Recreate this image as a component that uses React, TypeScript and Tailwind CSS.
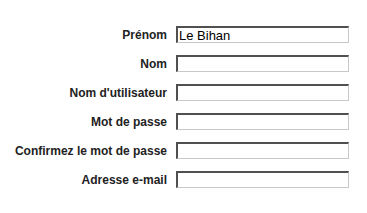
import React from 'react';

const fields: { label: string; value?: string }[] = [
  { label: 'Prénom', value: 'Le Bihan' },
  { label: 'Nom' },
  { label: "Nom d'utilisateur" },
  { label: 'Mot de passe' },
  { label: 'Confirmez le mot de passe' },
  { label: 'Adresse e-mail' },
];

const App: React.FC = () => {
  return (
    <div className="w-[367px] h-[213px] bg-white pt-[26px] pl-[10px] font-['Liberation_Sans',Arial,sans-serif]">
      <div className="grid grid-cols-[157px_173px] gap-x-[9px] gap-y-[12px]">
        {fields.map(f => (
          <React.Fragment key={f.label}>
            <label className="h-[17px] flex items-center justify-end text-[12px] font-bold text-[#222] whitespace-nowrap">
              {f.label}
            </label>
            <input
              type="text"
              defaultValue={f.value}
              className="h-[17px] w-[173px] bg-white border-t-2 border-l-2 border-r border-b border-t-[#505050] border-l-[#505050] border-r-[#c8c8c8] border-b-[#c8c8c8] px-[1px] text-[13px] leading-none text-black outline-none font-['Liberation_Sans',Arial,sans-serif]"
            />
          </React.Fragment>
        ))}
      </div>
    </div>
  );
};

export default App;
